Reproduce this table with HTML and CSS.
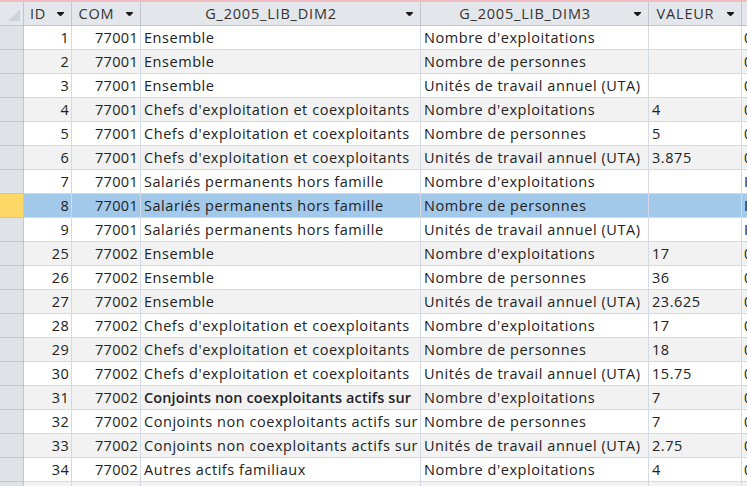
FILE: index.html
```html
<!DOCTYPE html>
<html lang="fr">
<head>
<meta charset="utf-8">
<link rel="stylesheet" href="styles.css">
</head>
<body>
<div class="topstrip"></div>
<div class="sheet">
  <div class="row head">
    <div class="sel corner"><svg width="23" height="23" viewBox="0 0 23 23"><polygon points="8,19 20,19 20,7" fill="#cfd3d8"/></svg></div>
    <div class="hc"><span class="cap">ID</span><svg class="arr" width="7" height="4" viewBox="0 0 7 4"><path d="M0 0H7V1L4 4H3L0 1Z" fill="#1a1a1a"/></svg></div>
    <div class="hc"><span class="cap">COM</span><svg class="arr" width="7" height="4" viewBox="0 0 7 4"><path d="M0 0H7V1L4 4H3L0 1Z" fill="#1a1a1a"/></svg></div>
    <div class="hc"><span class="cap">G_2005_LIB_DIM2</span><svg class="arr" width="7" height="4" viewBox="0 0 7 4"><path d="M0 0H7V1L4 4H3L0 1Z" fill="#1a1a1a"/></svg></div>
    <div class="hc"><span class="cap">G_2005_LIB_DIM3</span><svg class="arr" width="7" height="4" viewBox="0 0 7 4"><path d="M0 0H7V1L4 4H3L0 1Z" fill="#1a1a1a"/></svg></div>
    <div class="hc"><span class="cap">VALEUR</span><svg class="arr" width="7" height="4" viewBox="0 0 7 4"><path d="M0 0H7V1L4 4H3L0 1Z" fill="#1a1a1a"/></svg></div>
    <div class="hc last"></div>
  </div>

  <div class="row"><div class="sel"></div><div class="c num">1</div><div class="c num">77001</div><div class="c">Ensemble</div><div class="c">Nombre d'exploitations</div><div class="c"></div><div class="c last">0</div></div>
  <div class="row alt"><div class="sel"></div><div class="c num">2</div><div class="c num">77001</div><div class="c">Ensemble</div><div class="c">Nombre de personnes</div><div class="c"></div><div class="c last">0</div></div>
  <div class="row"><div class="sel"></div><div class="c num">3</div><div class="c num">77001</div><div class="c">Ensemble</div><div class="c">Unités de travail annuel (UTA)</div><div class="c"></div><div class="c last">0</div></div>
  <div class="row alt"><div class="sel"></div><div class="c num">4</div><div class="c num">77001</div><div class="c">Chefs d'exploitation et coexploitants</div><div class="c">Nombre d'exploitations</div><div class="c">4</div><div class="c last">0</div></div>
  <div class="row"><div class="sel"></div><div class="c num">5</div><div class="c num">77001</div><div class="c">Chefs d'exploitation et coexploitants</div><div class="c">Nombre de personnes</div><div class="c">5</div><div class="c last">0</div></div>
  <div class="row alt"><div class="sel"></div><div class="c num">6</div><div class="c num">77001</div><div class="c">Chefs d'exploitation et coexploitants</div><div class="c">Unités de travail annuel (UTA)</div><div class="c">3.875</div><div class="c last">0</div></div>
  <div class="row"><div class="sel"></div><div class="c num">7</div><div class="c num">77001</div><div class="c">Salariés permanents hors famille</div><div class="c">Nombre d'exploitations</div><div class="c"></div><div class="c last">I</div></div>
  <div class="row cur"><div class="sel"></div><div class="c num">8</div><div class="c num">77001</div><div class="c">Salariés permanents hors famille</div><div class="c">Nombre de personnes</div><div class="c"></div><div class="c last">I</div></div>
  <div class="row"><div class="sel"></div><div class="c num">9</div><div class="c num">77001</div><div class="c">Salariés permanents hors famille</div><div class="c">Unités de travail annuel (UTA)</div><div class="c"></div><div class="c last">I</div></div>
  <div class="row alt"><div class="sel"></div><div class="c num">25</div><div class="c num">77002</div><div class="c">Ensemble</div><div class="c">Nombre d'exploitations</div><div class="c">17</div><div class="c last">0</div></div>
  <div class="row"><div class="sel"></div><div class="c num">26</div><div class="c num">77002</div><div class="c">Ensemble</div><div class="c">Nombre de personnes</div><div class="c">36</div><div class="c last">0</div></div>
  <div class="row alt"><div class="sel"></div><div class="c num">27</div><div class="c num">77002</div><div class="c">Ensemble</div><div class="c">Unités de travail annuel (UTA)</div><div class="c">23.625</div><div class="c last">0</div></div>
  <div class="row"><div class="sel"></div><div class="c num">28</div><div class="c num">77002</div><div class="c">Chefs d'exploitation et coexploitants</div><div class="c">Nombre d'exploitations</div><div class="c">17</div><div class="c last">0</div></div>
  <div class="row alt"><div class="sel"></div><div class="c num">29</div><div class="c num">77002</div><div class="c">Chefs d'exploitation et coexploitants</div><div class="c">Nombre de personnes</div><div class="c">18</div><div class="c last">0</div></div>
  <div class="row"><div class="sel"></div><div class="c num">30</div><div class="c num">77002</div><div class="c">Chefs d'exploitation et coexploitants</div><div class="c">Unités de travail annuel (UTA)</div><div class="c">15.75</div><div class="c last">0</div></div>
  <div class="row alt"><div class="sel"></div><div class="c num">31</div><div class="c num">77002</div><div class="c bold">Conjoints non coexploitants actifs sur</div><div class="c">Nombre d'exploitations</div><div class="c">7</div><div class="c last">0</div></div>
  <div class="row"><div class="sel"></div><div class="c num">32</div><div class="c num">77002</div><div class="c">Conjoints non coexploitants actifs sur</div><div class="c">Nombre de personnes</div><div class="c">7</div><div class="c last">0</div></div>
  <div class="row alt"><div class="sel"></div><div class="c num">33</div><div class="c num">77002</div><div class="c">Conjoints non coexploitants actifs sur</div><div class="c">Unités de travail annuel (UTA)</div><div class="c">2.75</div><div class="c last">0</div></div>
  <div class="row"><div class="sel"></div><div class="c num">34</div><div class="c num">77002</div><div class="c">Autres actifs familiaux</div><div class="c">Nombre d'exploitations</div><div class="c">4</div><div class="c last">0</div></div>
  <div class="row alt"><div class="sel"></div><div class="c num"></div><div class="c num"></div><div class="c"></div><div class="c"></div><div class="c"></div><div class="c last"></div></div>
</div>
</body>
</html>
```
FILE: styles.css
```css
html, body {
  margin: 0;
  padding: 0;
  background: #ffffff;
  overflow: hidden;
}
body {
  width: 747px;
  height: 486px;
  font-family: "Open Sans", "Noto Sans", sans-serif;
  font-size: 14.5px;
  letter-spacing: 0.55px;
  color: #222222;
}
.topstrip {
  height: 2px;
  background: #f3bcc2;
}
.sheet {
  display: flex;
  flex-direction: column;
}
.row {
  display: grid;
  grid-template-columns: 24px 48px 69px 280px 228px 93px 1fr;
  height: 24px;
  background: #ffffff;
}
.row.alt {
  background: #f2f2f2;
}
.row.cur {
  background: #a3c9ea;
}
.row > div {
  box-sizing: border-box;
  border-right: 1px solid #d3dae6;
  border-bottom: 1px solid #d3dae6;
  overflow: hidden;
  white-space: nowrap;
  line-height: 23px;
}
.sel {
  background: #dfe2e6;
  border-right-color: #c2c6cb !important;
  border-bottom-color: #c2c6cb !important;
}
.row.cur .sel {
  background: #fdd866;
}
.c {
  padding: 0 3px;
}
.c.num {
  text-align: right;
  padding-right: 2px;
  letter-spacing: 0.3px;
}
.c.last {
  padding-left: 2px;
  border-right: none !important;
}
.c.bold {
  font-weight: 600;
  letter-spacing: 0.1px;
}
.head {
  background: #e3e6ea;
}
.head > div {
  border-right-color: #c2c7cd;
  border-bottom-color: #c2c7cd;
  color: #333333;
}
.corner {
  background: #e3e6ea;
  display: flex;
}
.hc {
  display: flex;
  align-items: center;
  padding-right: 7px;
}
.hc.last {
  border-right: none !important;
}
.cap {
  flex: 1;
  text-align: center;
  letter-spacing: 0.8px;
}
.arr {
  margin-left: 5px;
  flex: none;
}
```
